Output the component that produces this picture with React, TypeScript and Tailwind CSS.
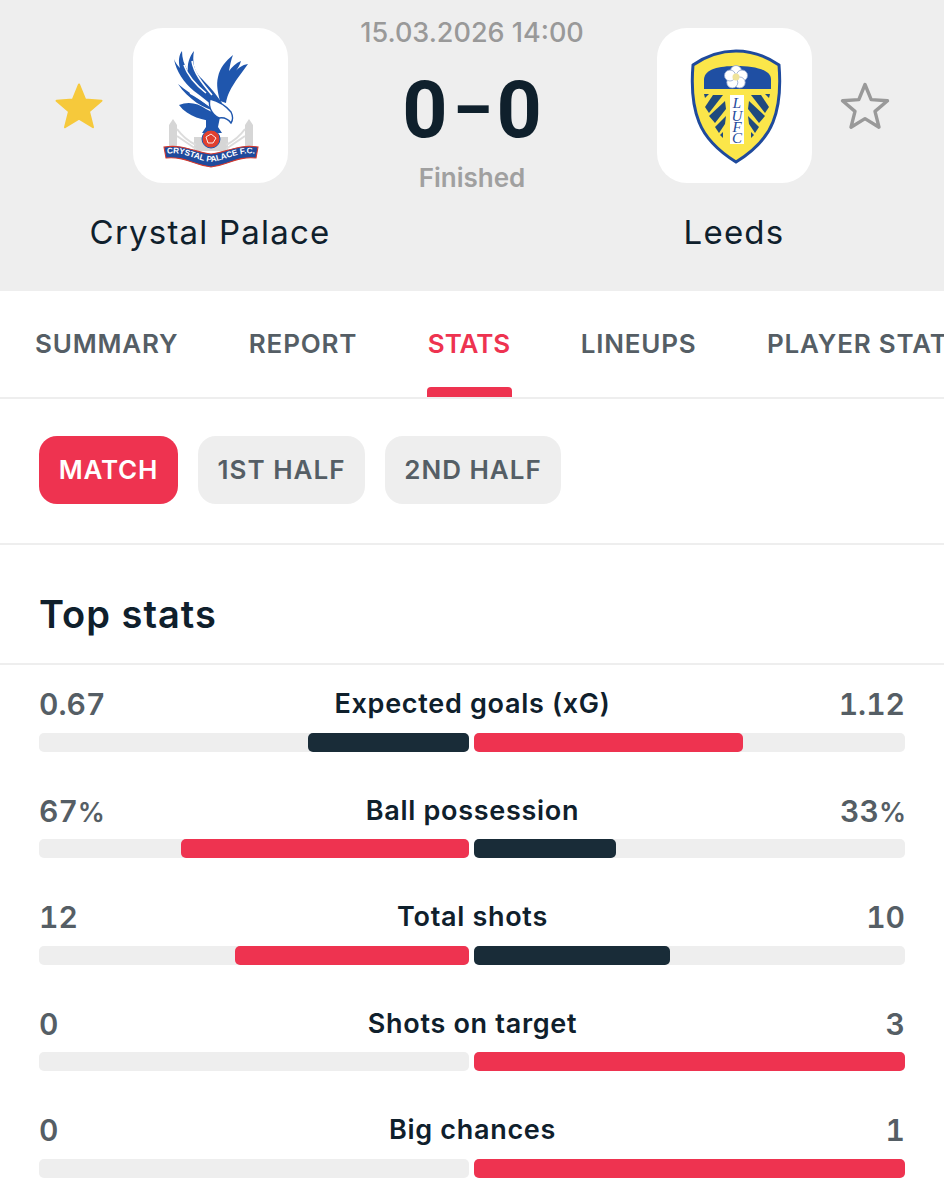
import React from "react";

type Stat = {
   label: string;
   home: string;
   away: string;
   homeWidth: number;
   awayWidth: number;
   homeLeads: boolean;
};

const stats: Stat[] = [
   { label: "Expected goals (xG)", home: "0.67", away: "1.12", homeWidth: 161, awayWidth: 269, homeLeads: false },
   { label: "Ball possession", home: "67%", away: "33%", homeWidth: 288, awayWidth: 142, homeLeads: true },
   { label: "Total shots", home: "12", away: "10", homeWidth: 234, awayWidth: 196, homeLeads: true },
   { label: "Shots on target", home: "0", away: "3", homeWidth: 0, awayWidth: 431, homeLeads: false },
   { label: "Big chances", home: "0", away: "1", homeWidth: 0, awayWidth: 431, homeLeads: false },
];

const tabs = ["SUMMARY", "REPORT", "STATS", "LINEUPS", "PLAYER STATS"];

function Star({ filled }: { filled: boolean }) {
   return (
      <svg width="50" height="50" viewBox="0 0 50 50" className="shrink-0">
         <path
            d="M25 3.5 L31.2 18.6 L47.5 19.8 L35 30.4 L39 46.2 L25 37.6 L11 46.2 L15 30.4 L2.5 19.8 L18.8 18.6 Z"
            fill={filled ? "#f6c93b" : "none"}
            stroke={filled ? "#f6c93b" : "#999999"}
            strokeWidth={filled ? 2 : 3.4}
            strokeLinejoin="round"
         />
      </svg>
   );
}

function PalaceBadge() {
   return (
      <svg width="110" height="130" viewBox="0 0 110 130">
         {/* towers and bridge */}
         <g fill="#d6d6d6">
            <path d="M13 106 L13 84 L17 78 L21 84 L21 106 Z" />
            <path d="M89 106 L89 84 L93 78 L97 84 L97 106 Z" />
            <rect x="38" y="96" width="34" height="14" />
         </g>
         <path d="M21 88 C26 95 32 100 40 104 M21 95 L40 108 M89 88 C84 95 78 100 70 104 M89 95 L70 108" stroke="#dcdcdc" strokeWidth="2" fill="none" />
         {/* eagle */}
         <g fill="#1f56ad">
            <path d="M18 18 C20 30 28 42 38 50 C46 56 54 62 62 70 L66 62 C58 50 50 42 44 36 C38 30 36 20 38 10 C33 16 31 24 32 30 C28 24 26 17 26 10 C23 14 22 20 24 27 C21 24 19 21 18 18 Z" />
            <path d="M22 43 C30 50 38 54 46 60 L60 70 C48 68 32 58 22 43 Z" />
            <path d="M23 64 C32 60 42 62 50 68 L62 74 L60 80 C48 80 32 76 23 64 Z" />
            <path d="M77 14 C70 20 64 26 62 36 C60 44 62 52 64 60 L70 62 C72 50 78 42 92 23 C86 24 82 27 79 31 C82 27 84 24 85 20 C80 22 76 26 73 30 C74 24 75 19 77 14 Z" />
            <path d="M50 78 L64 76 L62 86 L66 92 L46 92 L50 86 Z" />
         </g>
         <path d="M28 24 C32 36 40 44 50 52 M36 20 C38 32 46 42 56 54 M34 52 C42 56 50 62 58 68" stroke="#ffffff" strokeWidth="1.6" fill="none" />
         <path d="M54 58 C62 60 70 65 75 71 C77 75 77 79 75 82 C72 78 68 76 63 77 C56 74 52 66 54 58 Z" fill="#ffffff" stroke="#1f56ad" strokeWidth="1.4" />
         {/* ball */}
         <circle cx="55" cy="98" r="9" fill="#e0402f" stroke="#1f56ad" strokeWidth="1" />
         <path d="M50 96 L55 93 L60 97 L57 102 L52 102 Z" fill="none" stroke="#ffffff" strokeWidth="0.9" />
         {/* ribbon */}
         <path d="M8 106 C28 103 38 111 55 113 C72 111 82 103 102 106 L100 117 C82 115 72 124 55 126 C38 124 28 115 10 117 Z" fill="#1f4a9c" stroke="#d5392c" strokeWidth="1.1" />
         <path id="palace-ribbon" d="M11 113 C28 110 38 119 55 121 C72 119 82 110 99 113" fill="none" />
         <text fill="#ffffff" fontFamily="'Liberation Sans', sans-serif" fontWeight="700" fontSize="8.2">
            <textPath href="#palace-ribbon" startOffset="50%" textAnchor="middle">
               CRYSTAL PALACE F.C.
            </textPath>
         </text>
      </svg>
   );
}

function LeedsBadge() {
   return (
      <svg width="110" height="130" viewBox="0 0 110 130">
         {/* shield */}
         <path d="M56 10 C72 10 86 15 99 24 C101 48 99 66 93 81 C86 99 72 111 56 121 C40 111 26 99 19 81 C13 66 11 48 13 24 C26 15 40 10 56 10 Z" fill="#fbe64a" stroke="#1f4a9c" strokeWidth="3" />
         {/* blue band */}
         <path d="M24 48 L24 38 C25 28 39 25 56 25 C73 25 90 28 91 38 L91 48 Z" fill="#1f4fa3" />
         {/* rose */}
         <g fill="#ffffff" stroke="#8fa3cb" strokeWidth="0.8">
            <circle cx="56" cy="30" r="5.5" />
            <circle cx="62" cy="34.5" r="5.5" />
            <circle cx="59.7" cy="41.5" r="5.5" />
            <circle cx="52.3" cy="41.5" r="5.5" />
            <circle cx="50" cy="34.5" r="5.5" />
         </g>
         <circle cx="56" cy="36" r="3.5" fill="#efe39a" />
         {/* white stripe */}
         <rect x="50" y="54" width="14" height="49" fill="#ffffff" />
         {/* stripes */}
         <g fill="#1f4a7e">
            <path d="M24 53 L29 53 L25 57 Z" />
            <path d="M33 54 L43 54 L29 72 L25 66 Z" />
            <path d="M45 60 L46 68 L35 82 L29 75 Z" />
            <path d="M46 75 L45 83 L39 92 L35 86 Z" />
            <path d="M43 91 L43 97 L40 94 Z" />
            <path d="M90 53 L85 53 L89 57 Z" />
            <path d="M81 54 L71 54 L85 72 L89 66 Z" />
            <path d="M69 60 L68 68 L79 82 L85 75 Z" />
            <path d="M68 75 L69 83 L75 92 L79 86 Z" />
            <path d="M71 91 L71 97 L74 94 Z" />
         </g>
         {/* letters */}
         <text fill="#1f4a9c" fontFamily="'Liberation Serif', serif" fontStyle="italic" fontSize="15" textAnchor="middle">
            <tspan x="57" y="67">L</tspan>
            <tspan x="57" y="80">U</tspan>
            <tspan x="57" y="91">F</tspan>
            <tspan x="57" y="102">C</tspan>
         </text>
      </svg>
   );
}

function TeamLogo({ children }: { children: React.ReactNode }) {
   return (
      <div className="w-[155px] h-[155px] bg-white rounded-[30px] flex items-center justify-center">
         {children}
      </div>
   );
}

function StatValue({ value, right }: { value: string; right?: boolean }) {
   const isPercent = value.endsWith("%");
   return (
      <span className={`w-[120px] text-[30px] font-semibold tabular-nums text-[#555e65] ${right ? "text-right" : ""}`}>
         {isPercent ? value.slice(0, -1) : value}
         {isPercent && <span className="text-[27px] tracking-[-1px]">%</span>}
      </span>
   );
}

function StatRow({ stat }: { stat: Stat }) {
   const homeColor = stat.homeLeads ? "bg-[#ee3350]" : "bg-[#192c38]";
   const awayColor = stat.homeLeads ? "bg-[#192c38]" : "bg-[#ee3350]";

   return (
      <div className="h-[106.5px] px-[39px] pt-[21.5px]">
         <div className="flex items-center justify-between h-[36px]">
            <StatValue value={stat.home} />
            <span className="ml-[1px] text-[27px] font-semibold text-[#0f202c] tracking-[0.7px]">{stat.label}</span>
            <StatValue value={stat.away} right />
         </div>
         <div className="flex gap-[5px] mt-[10px]">
            <div className="w-[430px] h-[19px] bg-[#eeeeee] rounded-[5px] flex justify-end">
               <div className={`h-full rounded-[5px] ${homeColor}`} style={{ width: stat.homeWidth }} />
            </div>
            <div className="w-[431px] h-[19px] bg-[#eeeeee] rounded-[5px] flex">
               <div className={`h-full rounded-[5px] ${awayColor}`} style={{ width: stat.awayWidth }} />
            </div>
         </div>
      </div>
   );
}

export default function App() {
   return (
      <div className="w-[944px] h-[1200px] overflow-hidden bg-white font-['Inter',sans-serif]">
         <div className="h-[291px] bg-[#eeeeee] flex">
            <div className="w-[420px] flex flex-col items-center pt-[28px]">
               <div className="flex items-center w-full pl-[54px]">
                  <Star filled />
                  <div className="ml-[29px]">
                     <TeamLogo>
                        <PalaceBadge />
                     </TeamLogo>
                  </div>
               </div>
               <div className="w-full mt-[28px] text-[33px] leading-[42px] text-[#0f202c] tracking-[1.2px] text-center">
                  Crystal Palace
               </div>
            </div>
            <div className="w-[104px] flex flex-col items-center">
               <div className="whitespace-nowrap mt-[17px] text-[27px] leading-[32px] font-medium text-[#999999]">15.03.2026 14:00</div>
               <div className="flex items-center gap-[6px] mt-[15px] h-[92px] text-[79px] font-bold font-['Roboto',sans-serif] text-[#0f202c]">
                  <span>0</span>
                  <span className="text-[60px] font-black">–</span>
                  <span>0</span>
               </div>
               <div className="whitespace-nowrap mt-[6px] text-[26px] leading-[32px] font-semibold text-[#a0a0a0]">Finished</div>
            </div>
            <div className="w-[420px] flex flex-col items-center pt-[28px]">
               <div className="flex items-center w-full pl-[133px]">
                  <TeamLogo>
                     <LeedsBadge />
                  </TeamLogo>
                  <div className="ml-[28px]">
                     <Star filled={false} />
                  </div>
               </div>
               <div className="w-full mt-[28px] text-[33px] leading-[42px] text-[#0f202c] tracking-[1.2px] text-center">
                  Leeds
               </div>
            </div>
         </div>

         <div className="h-[108px] border-b-2 border-[#eeeeee] flex items-start gap-[70.5px] pl-[35px] overflow-hidden">
            {tabs.map((tab) => (
               <div key={tab} className={`h-full relative pt-[35px] whitespace-nowrap text-[26px] leading-[36px] font-semibold ${tab === "STATS" ? "text-[#ee3350] tracking-[0px]" : "text-[#555e65] tracking-[0.8px]"}`}>
                  {tab}
                  {tab === "STATS" && (
                     <div className="absolute -left-[1px] -right-[2px] bottom-0 h-[10px] bg-[#ee3350] rounded-t-[4px]" />
                  )}
               </div>
            ))}
         </div>

         <div className="h-[146px] border-b-2 border-[#eeeeee] flex items-start gap-[20px] pl-[39px] pt-[37px]">
            <div className="w-[139px] h-[68px] pb-[2px] flex items-center justify-center rounded-[18px] bg-[#ee3350] text-white text-[26px] font-semibold tracking-[0.8px]">MATCH</div>
            <div className="w-[167px] h-[68px] pb-[2px] flex items-center justify-center rounded-[18px] bg-[#eeeeee] text-[#555e65] text-[26px] font-semibold tracking-[1px]">1ST HALF</div>
            <div className="w-[176px] h-[68px] pb-[2px] flex items-center justify-center rounded-[18px] bg-[#eeeeee] text-[#555e65] text-[26px] font-semibold tracking-[1px]">2ND HALF</div>
         </div>

         <div className="h-[120px] border-b-2 border-[#eeeeee] pl-[39px] pt-[45px] text-[38px] leading-[48px] font-semibold text-[#0f202c] tracking-[1px]">Top stats</div>

         <div>
            {stats.map((stat) => (
               <StatRow key={stat.label} stat={stat} />
            ))}
         </div>
      </div>
   );
}
